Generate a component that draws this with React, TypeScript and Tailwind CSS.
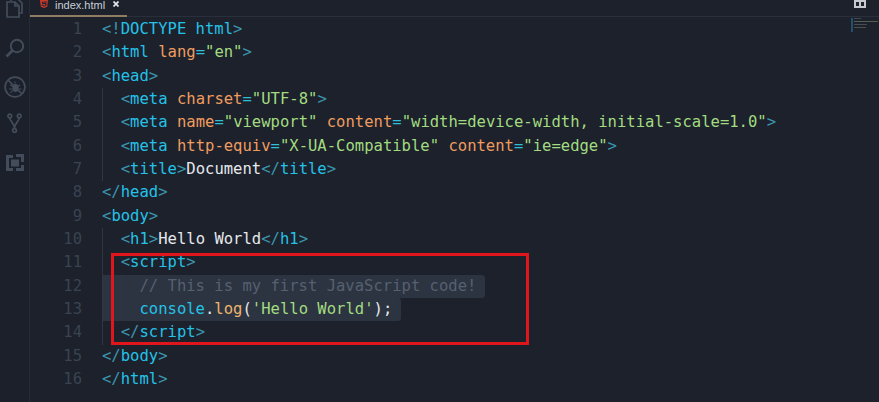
import React from "react";

const T = ({ c }: { c: string }) => <span className="text-[#25c2e8]">{c}</span>;
const B = ({ c }: { c: string }) => <span className="text-[#3b95ad]">{c}</span>;
const A = ({ c }: { c: string }) => <span className="text-[#f09c5f]">{c}</span>;
const S = ({ c }: { c: string }) => <span className="text-[#a3dc80]">{c}</span>;
const W = ({ c }: { c: string }) => <span className="text-[#e6e9ed]">{c}</span>;
const Eq = () => <span className="text-[#2fbfd6]">=</span>;

const Open = ({ n }: { n: string }) => (<><B c="<" /><T c={n} /><B c=">" /></>);
const Close = ({ n }: { n: string }) => (<><B c="</" /><T c={n} /><B c=">" /></>);

const Guide = ({ x }: { x: number }) => (
  <span className={`absolute top-0 bottom-0 w-px bg-[#303743] ${x === 0 ? "left-0" : "left-[19px]"}`} />
);

const lines: { g?: number[]; sel?: boolean; node: React.ReactNode }[] = [
  { node: <><B c="<!" /><T c="DOCTYPE html" /><B c=">" /></> },
  { node: <><B c="<" /><T c="html" /> <A c="lang" /><Eq /><S c={'"en"'} /><B c=">" /></> },
  { node: <Open n="head" /> },
  { g: [0], node: <>  <B c="<" /><T c="meta" /> <A c="charset" /><Eq /><S c={'"UTF-8"'} /><B c=">" /></> },
  { g: [0], node: <>  <B c="<" /><T c="meta" /> <A c="name" /><Eq /><S c={'"viewport"'} /> <A c="content" /><Eq /><S c={'"width=device-width, initial-scale=1.0"'} /><B c=">" /></> },
  { g: [0], node: <>  <B c="<" /><T c="meta" /> <A c="http-equiv" /><Eq /><S c={'"X-UA-Compatible"'} /> <A c="content" /><Eq /><S c={'"ie=edge"'} /><B c=">" /></> },
  { g: [0], node: <>  <Open n="title" /><W c="Document" /><Close n="title" /></> },
  { node: <Close n="head" /> },
  { node: <Open n="body" /> },
  { g: [0], node: <>  <Open n="h1" /><W c="Hello World" /><Close n="h1" /></> },
  { g: [0], node: <>  <Open n="script" /></> },
  { g: [0, 1], sel: true, node: <>    <span className="text-[#566070]">// This is my first JavaScript code!</span></> },
  { g: [0, 1], sel: true, node: <>    <T c="console" /><W c="." /><span className="text-[#eeb56c]">log</span><W c="(" /><S c="'Hello World'" /><W c=")" /><W c=";" /></> },
  { g: [0], node: <>  <Close n="script" /></> },
  { node: <Close n="body" /> },
  { node: <Close n="html" /> },
];

export default function App() {
  return (
    <div className="w-[879px] h-[402px] overflow-hidden flex bg-[#1c212c] relative font-['DejaVu_Sans_Mono',monospace]">
      {/* Activity bar */}
      <div className="w-[30px] h-[404px] shrink-0 bg-[#1b202a] border-r border-[#262c37] flex flex-col items-center text-[#434c5a] -mt-[2px]">
        <svg width="17" height="20" viewBox="0 0 17 20" fill="none" stroke="currentColor" strokeWidth="1.7" className="-ml-[1px]">
          <path d="M5 0v3M5 1h7l4 4v10h-3" />
          <path d="M1 4h8l4 4v11H1zM9 4v4h4" />
        </svg>
        <svg className="mt-[20px]" width="20" height="20" viewBox="0 0 20 20" fill="none" stroke="currentColor" strokeWidth="2">
          <circle cx="12" cy="8" r="6.200" />
          <path d="M7.500 12.500L1.500 18.500" strokeWidth="2.600" />
        </svg>
        <svg className="mt-[18px]" width="22" height="22" viewBox="0 0 22 22" fill="none" stroke="currentColor" strokeWidth="1.700">
          <circle cx="11" cy="11" r="9.900" />
          <path d="M4 4l14 14" />
          <ellipse cx="11.500" cy="12" rx="3.200" ry="4" fill="currentColor" stroke="none" />
          <path d="M6 9l3 1.500M5 13h3M6.500 17l2-2.500M16 9l-2 1.500M17.500 13h-3M11 5.500v2" strokeWidth="1.200" />
        </svg>
        <svg className="mt-[15px]" width="15" height="21" viewBox="0 0 16 22" fill="none" stroke="currentColor" strokeWidth="1.800">
          <circle cx="3" cy="3" r="2" />
          <circle cx="13" cy="3" r="2" />
          <circle cx="8" cy="18.500" r="2" />
          <path d="M3 5c0 4 5 5 5 11.500M13 5c0 4-5 5-5 11.500" />
        </svg>
        <svg className="mt-[20px]" width="18" height="18" viewBox="0 0 18 18" fill="currentColor">
          <path fillRule="evenodd" d="M0 1h7v3H3v10h4v3H0zM10 0h8v8h-3V3h-5zM10 14h5v-3h3v6h-8z" />
          <rect x="5" y="5.500" width="8" height="7" />
        </svg>
      </div>

      {/* Main */}
      <div className="flex-1 min-w-0 flex flex-col">
        {/* Tab bar */}
        <div className="h-[17px] shrink-0 flex bg-[#1c212c] border-b border-[#2a303b]">
          <div className="w-[97px] h-[17px] shrink-0 flex items-start pl-[10px] border-b-2 border-[#8f7d62] font-['Liberation_Sans',sans-serif]">
            <svg width="8" height="8" viewBox="0 0 10 12" className="text-[#c93a2b]" fill="currentColor" preserveAspectRatio="none">
              <path d="M0 0h10l-1 10-4 2-4-2zM2.500 2.500l.3 3.500h4l-.1 1.700-1.700.6-1.700-.6-.1-.9H2l.2 2 2.800 1 2.800-1 .5-5H3.700l-.1-1.200h4.700v-1z" fillRule="evenodd" />
            </svg>
            <span className="ml-[7px] text-[11px] leading-[10px] text-[#c9ced6]">index.html</span>
            <svg width="6" height="6" viewBox="0 0 6 6" className="ml-[8px] mt-[1px] text-[#e4e7eb]" fill="none" stroke="currentColor" strokeWidth="1.700">
              <path d="M0.500 0.500l5 5M5.500 0.500l-5 5" />
            </svg>
          </div>
          <div className="flex-1" />
          <div className="w-[12px] h-[8px] mr-[13px] border-2 border-[#c5cad1] flex justify-center">
            <span className="w-[2px] bg-[#c5cad1]" />
          </div>
        </div>

        {/* Code */}
        <div className="flex-1 flex pt-[1px] text-[15.55px] leading-[23.33px] relative">
          <div className="w-[52px] shrink-0 text-right text-[#3b4350]">
            {lines.map((_, i) => (
              <div key={i} className="h-[23.33px]">{i + 1}</div>
            ))}
          </div>
          <div className="ml-[20px] flex-1 min-w-0">
            {lines.map((l, i) => (
              <div key={i} className="h-[23.33px] relative whitespace-pre">
                {l.sel ? (
                  <span className="inline-block h-[23.33px] pr-[9px] bg-[#2c3441] rounded-r-[3px]">{l.node}</span>
                ) : (
                  l.node
                )}
                {l.g?.map((x) => <Guide key={x} x={x} />)}
              </div>
            ))}
          </div>

          {/* Minimap */}
          <div className="absolute left-[821px] top-[1px] flex flex-col gap-[2px]">
            <span className="w-[2px] h-[14px] absolute left-0 top-0 bg-[#23506a]" />
            <span className="ml-[3px] w-[7px] h-px bg-[#3d4a52]" />
            <span className="ml-[3px] w-[24px] h-px bg-[#565d52]" />
            <span className="ml-[3px] w-[13px] h-px bg-[#434e50]" />
            <span className="ml-[3px] w-[12px] h-px bg-[#4c524a]" />
          </div>
        </div>
      </div>

      {/* Red annotation */}
      <div className="absolute left-[111px] top-[253px] w-[418px] h-[92px] border-[3px] border-[#e0161c] pointer-events-none" />
    </div>
  );
}
